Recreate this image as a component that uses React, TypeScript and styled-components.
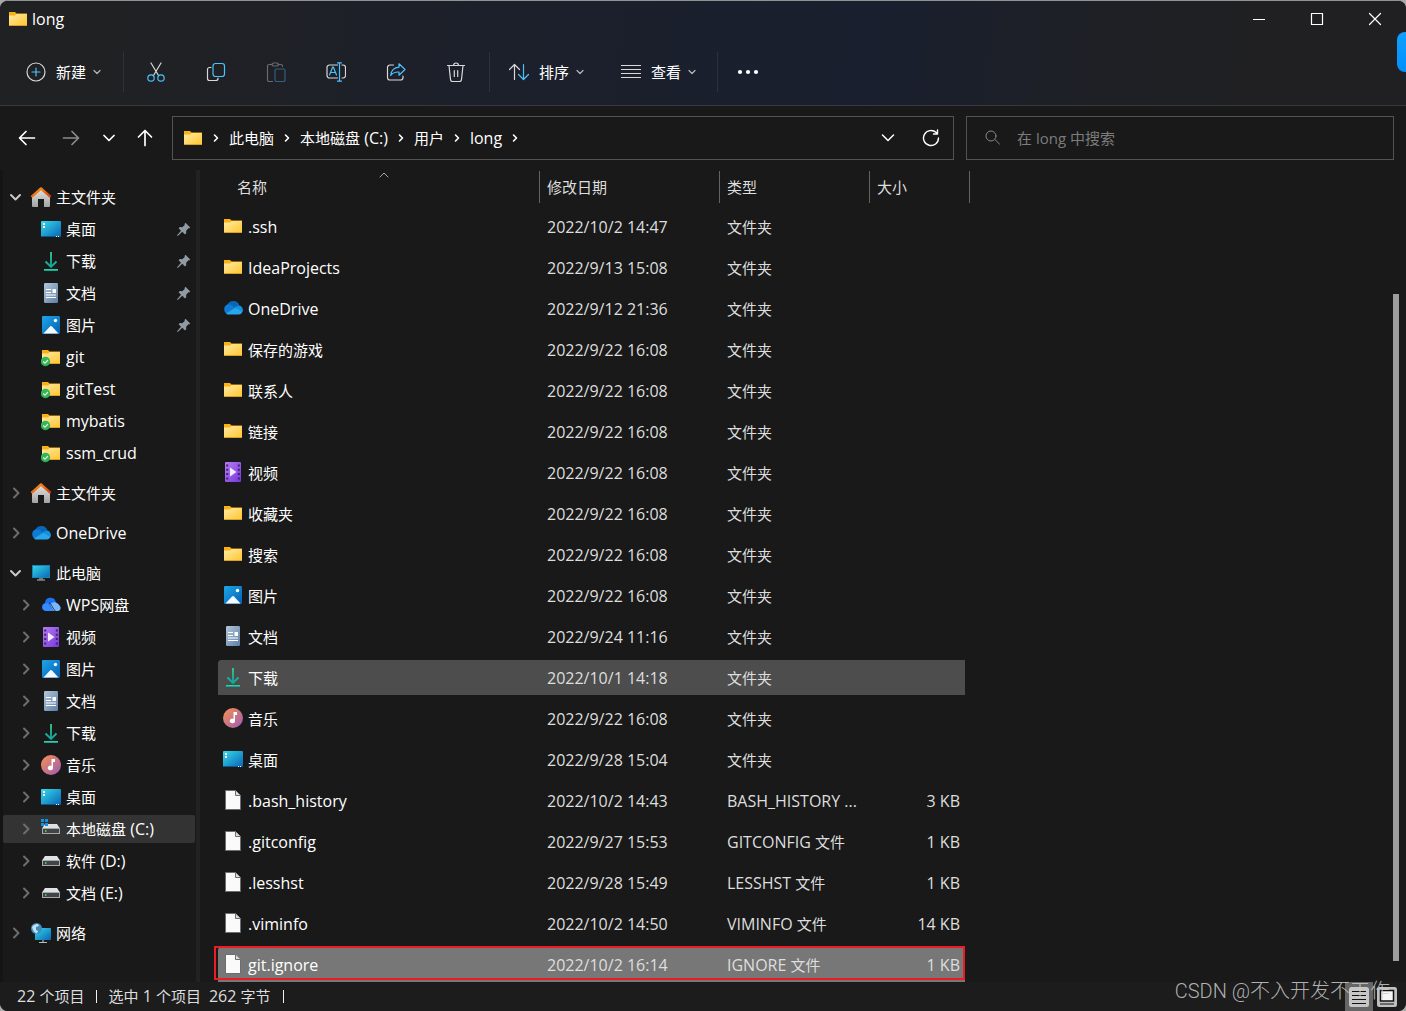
import React from "react";
import styled, { createGlobalStyle, css } from "styled-components";

const fontStack = `"Open Sans", "Noto Sans CJK SC", sans-serif`;

const GlobalStyle = createGlobalStyle`
  * { box-sizing: border-box; }
  html, body { margin: 0; height: 100%; }
  #root { height: 100%; }
  body {
    background: #a9aba9;
    color: #fff;
    font-family: ${fontStack};
    font-size: 15px;
    line-height: 20px;
    overflow: hidden;
  }
  button, input {
    font: inherit;
    color: inherit;
    background: none;
    border: 0;
    padding: 0;
    margin: 0;
  }
  svg { display: block; flex: none; }
`;

const Window = styled.div`
  position: relative;
  display: flex;
  flex-direction: column;
  height: 100%;
  overflow: hidden;
  border-top: 1px solid #8f9393;
  border-radius: 8px;
  background: #191919;
`;

const Top = styled.header`
  border-bottom: 1px solid #393a3c;
  background: linear-gradient(97deg, #202123 8%, #1c202b 36%, #1a1f2f 62%, #1d2027 74%, #202022 90%);
`;

const TitleBar = styled.div`
  display: flex;
  align-items: center;
  justify-content: space-between;
  height: 36px;
`;

const Title = styled.h1`
  display: flex;
  align-items: center;
  gap: 4px;
  margin: 0;
  padding-left: 8px;
  font-size: 15px;
  font-weight: 400;
`;

const WindowControls = styled.div`
  display: flex;
  padding-right: 2px;
`;

const ControlButton = styled.button`
  display: flex;
  align-items: center;
  justify-content: center;
  width: 58px;
  height: 36px;
`;

const Toolbar = styled.div`
  display: flex;
  align-items: center;
  height: 68px;
  padding: 2px 0 0 18px;
`;

const ToolButton = styled.button<{ $disabled?: boolean }>`
  display: flex;
  align-items: center;
  justify-content: center;
  width: 60px;
  height: 40px;
  opacity: ${(p) => (p.$disabled ? 0.4 : 1)};
`;

const MenuGroup = styled.div`
  display: flex;
  gap: 20px;
`;

const MenuButton = styled.button`
  display: flex;
  align-items: center;
  gap: 6px;
  height: 40px;
  padding: 0 8px;

  svg:first-child { margin-right: 4px; }
`;

const Separator = styled.span<{ $before?: number; $after?: number }>`
  width: 1px;
  height: 40px;
  margin: 0 ${(p) => p.$after ?? 0}px 0 ${(p) => p.$before ?? 0}px;
  background: #2e3138;
`;

const AddressRow = styled.div`
  display: flex;
  align-items: center;
  height: 64px;
  padding: 0 12px 0 7px;
`;

const NavButtons = styled.nav`
  display: flex;
  margin-right: 5px;
`;

const NavButton = styled.button<{ $width: number }>`
  display: flex;
  align-items: center;
  justify-content: center;
  width: ${(p) => p.$width}px;
  height: 36px;
`;

const AddressBox = styled.div`
  display: flex;
  align-items: center;
  flex: 760 1 0;
  height: 44px;
  padding: 0 10px;
  border: 1px solid #535353;
`;

const Crumbs = styled.ol`
  display: flex;
  align-items: center;
  flex: 1;
  margin: 0;
  padding: 0;
  list-style: none;
`;

const Crumb = styled.li`
  display: flex;
  align-items: center;

  svg { margin: 0 8px; }
`;

const AddressButton = styled.button`
  display: flex;
  align-items: center;
  justify-content: center;
  width: 24px;
  height: 36px;
  margin-left: 19px;
`;

const SearchBox = styled.label`
  display: flex;
  align-items: center;
  flex: 390 1 0;
  gap: 16px;
  height: 44px;
  margin-left: 12px;
  padding: 0 18px;
  border: 1px solid #535353;

  input {
    flex: 1;
    min-width: 0;
    outline: 0;
  }
  input::placeholder { color: #7c7c7c; opacity: 1; }
`;

const Main = styled.main`
  display: flex;
  flex: 1;
  min-height: 0;
`;

const Sidebar = styled.nav`
  width: 200px;
  flex: none;
  padding-top: 11px;
  border-left: 3px solid #141414;
  border-right: 4px solid #222222;
`;

const Group = styled.ul`
  margin: 0 0 8px;
  padding: 0;
  list-style: none;
`;

const SideRow = styled.li`
  padding: 2px 1px 2px 0;
`;

const SideItem = styled.button<{ $level: number; $selected?: boolean }>`
  display: flex;
  align-items: center;
  width: 100%;
  height: 28px;
  padding: 0 4px 0 ${(p) => (p.$level === 1 ? 4 : 14)}px;
  border-radius: 2px;
  background: ${(p) => (p.$selected ? "#333333" : "none")};
  text-align: left;
`;

const Twisty = styled.span`
  width: 16px;
  margin-right: 8px;
`;

const SideLabel = styled.span`
  flex: 1;
  padding-left: 5px;
  white-space: nowrap;
`;

const FileArea = styled.section`
  flex: 1;
  min-width: 0;
  padding-left: 18px;
  overflow: hidden;
`;

const FileTable = styled.table`
  border-collapse: separate;
  border-spacing: 0;
  table-layout: fixed;
  width: 752px;
`;

const HeadCell = styled.th<{ $width: number; $first?: boolean }>`
  position: relative;
  width: ${(p) => p.$width}px;
  height: 39px;
  padding: 0 0 6px ${(p) => (p.$first ? 19 : 7)}px;
  color: #dedede;
  font-weight: 400;
  text-align: left;

  &::after {
    content: "";
    position: absolute;
    top: 1px;
    right: 0;
    width: 1px;
    height: 32px;
    background: #636363;
  }
`;

const SortMark = styled.span`
  position: absolute;
  top: 2px;
  left: 50%;
`;

const Cell = styled.td`
  height: 41px;
  padding: 0 7px;
  border-bottom: 6px solid transparent;
  background-clip: padding-box;
  color: #dedede;
  white-space: nowrap;
`;

const NameCell = styled(Cell)`
  padding: 7px 5px 0;
  border-radius: 3px 0 0 3px;
  color: #fff;
  line-height: 22px;
  vertical-align: top;
`;

const SizeCell = styled(Cell)`
  padding: 0 5px;
  border-right: 5px solid transparent;
  text-align: right;
`;

const Row = styled.tr<{ $state?: "hover" | "selected" }>`
  position: relative;

  ${(p) => p.$state === "hover" && css`td { background-color: #4d4d4d; }`}
  ${(p) =>
    p.$state === "selected" &&
    css`
      td { background-color: #777777; }
      &::after {
        content: "";
        position: absolute;
        inset: -1px 5px 8px -4px;
        border: 2px solid #ed1c24;
      }
    `}
`;

const NameLine = styled.div`
  display: flex;
  align-items: flex-start;
  gap: 5px;
`;

const ScrollTrack = styled.div`
  display: flex;
  flex: none;
  width: 13px;
  padding: 124px 7px 21px 0;
`;

const ScrollThumb = styled.div`
  flex: 1;
  background: #9d9d9d;
`;

const StatusBar = styled.footer`
  display: flex;
  align-items: center;
  height: 29px;
  padding: 0 5px 0 17px;
  background: #1c1c1c;
  color: #dedede;
`;

const StatusText = styled.span`
  margin-right: 8px;
  padding-bottom: 2px;
`;

const StatusRule = styled.span`
  width: 1px;
  height: 13px;
  margin: 0 11px 0 4px;
  background: #f0f0f0;
`;

const ViewButtons = styled.div`
  display: flex;
  margin-left: auto;
`;

const ViewButton = styled.button<{ $on?: boolean }>`
  display: flex;
  align-items: center;
  justify-content: center;
  width: 28px;
  height: 29px;
  background: ${(p) => (p.$on ? "#666666" : "none")};
`;

const Watermark = styled.div`
  position: absolute;
  right: 16px;
  bottom: 6px;
  color: rgba(205, 205, 205, 0.85);
  font-family: Roboto, "Noto Sans CJK SC", sans-serif;
  font-size: 20px;
  font-weight: 300;
  line-height: 28px;
  pointer-events: none;
`;

const EdgeTab = styled.button`
  position: absolute;
  top: 31px;
  right: 0;
  width: 9px;
  height: 40px;
  border-radius: 8px 0 0 8px;
  background: linear-gradient(#10a0ff, #0090ff);
`;

const LatinRun = styled.span`
  font-size: 16px;
`;

/* Latin runs are set one size up so that they balance the ideographs beside them. */
function Label({ children }: { children: string }) {
  const runs = children.match(/[\u0000-\u00ff]+|[^\u0000-\u00ff]+/g) ?? [];
  return (
    <>
      {runs.map((run, i) =>
        run.charCodeAt(0) < 256 ? <LatinRun key={i}>{run}</LatinRun> : <React.Fragment key={i}>{run}</React.Fragment>
      )}
    </>
  );
}

type IconName =
  | "folder" | "synced" | "home" | "desktop" | "download" | "document" | "picture"
  | "cloud" | "pc" | "wps" | "video" | "music" | "system" | "drive" | "network" | "file";

const drawings: Record<IconName, React.ReactNode> = {
  folder: (
    <>
      <path d="M1 3h6l1.500 1.500H19V8H1z" fill="#f9b114" />
      <path d="M1 6.500h6L8.500 5H19v12H1z" fill="url(#gFolder)" />
      <path d="M1 16.500h18" stroke="#dba125" />
    </>
  ),
  synced: (
    <>
      <path d="M1 3h6l1.500 1.500H19V8H1z" fill="#f9b114" />
      <path d="M1 6.500h6L8.500 5H19v12H1z" fill="url(#gFolder)" />
      <path d="M1 16.500h18" stroke="#dba125" />
      <circle cx="4.500" cy="14.500" r="4.700" fill="#35b558" />
      <path d="M2.300 14.500l1.700 1.700 3-3.200" fill="none" stroke="#d9ffe2" strokeWidth="1.100" />
    </>
  ),
  home: (
    <>
      <path d="M1 9.500L10 1.500l9 8V19a1 1 0 0 1-1 1h-5v-8H7v8H2a1 1 0 0 1-1-1z" fill="url(#gHome)" />
      <path d="M1 9.300L10 1.500l9 7.800" fill="none" stroke="url(#gRoof)" strokeWidth="2.400" strokeLinecap="round" strokeLinejoin="round" />
    </>
  ),
  desktop: (
    <>
      <rect y="2" width="20" height="16" rx="1" fill="url(#gScreen)" />
      <path d="M0 17h20v0a1 1 0 0 1-1 1H1a1 1 0 0 1-1-1z" fill="#0a5791" />
      <path d="M2 4h2v2H2zM2 7h2v2H2zM15 17h1v1h-1zM17 17h1v1h-1z" fill="#fff" />
    </>
  ),
  download: (
    <g fill="none" stroke="url(#gDown)" strokeWidth="1.800">
      <path d="M10.010 1L10 15.500M4.500 10.500L10 16l5.500-5.500" />
      <path d="M3 19.010L17 19" />
    </g>
  ),
  document: (
    <>
      <rect x="3" width="14" height="20" rx="1.200" fill="url(#gDoc)" />
      <path d="M5 6.500h5M5 9.500h5M5 12h10M5 14.500h10" stroke="#fff" strokeWidth="1.100" />
      <path d="M11.500 6h3.500v4h-3.500z" fill="#fff" />
    </>
  ),
  picture: (
    <>
      <rect x="1" y="1" width="18" height="18" rx="1.200" fill="url(#gPic)" />
      <path d="M2.500 18.500L9 11.500q1-1 2 0l6.500 7z" fill="#f4faff" />
      <circle cx="14.500" cy="5.500" r="1.700" fill="#fff" />
    </>
  ),
  cloud: (
    <>
      <path d="M4 7.500C5.500 3.800 8 3 10.500 3c3 0 5.300 2 6 4.800L10 12z" fill="#0a66b8" />
      <path d="M5 16a5 5 0 0 1-.6-9.500C7 5.800 9 7.500 11 9l6 6z" fill="#0f7bd6" />
      <path d="M3 15.500L14.800 8.200A4.200 4.200 0 0 1 16 16.500H5q-1.200-.2-2-1z" fill="#28a8ea" />
      <path d="M11.500 9.200l4.200-1.600A4.500 4.500 0 0 1 19.500 14z" fill="#1490df" />
    </>
  ),
  pc: (
    <>
      <rect x="1" y="2" width="18" height="13" rx=".6" fill="url(#gScreen)" />
      <rect x="1.500" y="2.500" width="17" height="12" fill="none" stroke="#1685b4" />
      <path d="M8 15h4v1.500H8z" fill="#69747c" />
      <path d="M6 17h8" stroke="#b4bdc2" />
    </>
  ),
  wps: (
    <>
      <path d="M4 8a5.500 5.500 0 0 1 10.500-2l2 8-10-5z" fill="#1d72f2" />
      <path d="M4.500 16A4 4 0 0 1 4 8.200C9 7 9.500 13.500 13.500 16z" fill="#348bff" />
      <path d="M9 9.500c3-4 8-2.500 10.500 2.500.500 2-.5 4-3 4h-3C11 15 10.500 12 9 9.500z" fill="#79b7ff" />
      <path d="M8 7.500c3 1 3.500 6.500 6.500 8.500" fill="none" stroke="#1b2b45" strokeWidth=".8" />
    </>
  ),
  video: (
    <>
      <rect x="2" width="16" height="20" rx="1" fill="url(#gVideo)" />
      <path d="M4.200 2.500v16M15.800 2.500v16" stroke="#44206f" strokeWidth="2" strokeDasharray="2 2.300" />
      <path d="M7 5.500v9l6.500-4.500z" fill="#f4eaff" />
    </>
  ),
  music: (
    <>
      <circle cx="10" cy="10" r="10" fill="url(#gMusic)" />
      <path d="M10.500 4h3.500v3h-2v6a2.600 2.300 0 1 1-1.500-2.100z" fill="#fff" />
    </>
  ),
  system: (
    <>
      <path d="M4 5h12l3 4.500V15H1V9.500z" fill="#dfe1e4" />
      <path d="M1.500 9.500h17v5h-17z" fill="#414345" stroke="#a6a9ab" />
      <path d="M4 12h1.500" stroke="#45f05a" strokeWidth="1.600" />
      <path d="M0 0h3v3H0zM4 0h3v3H4zM0 4h3v3H0zM4 4h3v3H4z" fill="#1591e2" />
    </>
  ),
  drive: (
    <>
      <path d="M4 5h12l3 4.500V15H1V9.500z" fill="#dfe1e4" />
      <path d="M1.500 9.500h17v5h-17z" fill="#414345" stroke="#a6a9ab" />
      <path d="M4 12h1.500" stroke="#45f05a" strokeWidth="1.600" />
    </>
  ),
  network: (
    <>
      <rect x="4" y="5" width="16" height="12" rx=".6" fill="url(#gScreen)" />
      <path d="M11 17h2v2h-2z" fill="#69747c" />
      <path d="M8 19.500h8" stroke="#b4bdc2" />
      <circle cx="5.500" cy="5.500" r="5.500" fill="#3e8dbd" />
      <path d="M1 4q2-3 6-3l1 2-3 1v3l2 1-1 2.500Q2 9 1 4z" fill="#c4e2f2" />
    </>
  ),
  file: (
    <>
      <path d="M2.500.5h10l5 5v14h-15z" fill="#fafafa" stroke="#6d6d6d" />
      <path d="M12.500.5v5h5" fill="#dcdcdc" stroke="#6d6d6d" />
    </>
  ),
};

const Icon = ({ name }: { name: IconName }) => (
  <svg width="20" height="20" viewBox="0 0 20 20" aria-hidden="true">{drawings[name]}</svg>
);

const Gradient = ({ id, from, to, flat }: { id: string; from: string; to: string; flat?: boolean }) => (
  <linearGradient id={id} x1="0" y1="0" x2={flat ? "0" : "1"} y2="1">
    <stop stopColor={from} />
    <stop offset="1" stopColor={to} />
  </linearGradient>
);

const HiddenDefs = styled.svg`
  position: absolute;
`;

const Gradients = () => (
  <HiddenDefs width="0" height="0" aria-hidden="true">
    <defs>
      <Gradient id="gFolder" from="#ffeaa4" to="#ffc62e" />
      <Gradient id="gHome" from="#e4e4e4" to="#a2a2a2" flat />
      <Gradient id="gRoof" from="#ff9a1c" to="#d6400c" />
      <Gradient id="gScreen" from="#35dbe8" to="#0963b8" />
      <Gradient id="gDown" from="#35d08b" to="#0fa5a5" flat />
      <Gradient id="gDoc" from="#b3c7dc" to="#5d7ea3" />
      <Gradient id="gPic" from="#1ea6ea" to="#0460b4" />
      <Gradient id="gVideo" from="#b77cf3" to="#7637dc" />
      <Gradient id="gMusic" from="#fb9150" to="#9a5ab5" />
    </defs>
  </HiddenDefs>
);

interface StrokeProps {
  d: string;
  w?: number;
  h?: number;
  color?: string;
  width?: number;
}

const Stroke = ({ d, w = 12, h = 12, color = "#fff", width = 1 }: StrokeProps) => (
  <svg width={w} height={h} viewBox={`0 0 ${w} ${h}`} fill="none" stroke={color} strokeWidth={width} strokeLinecap="round" strokeLinejoin="round" aria-hidden="true">
    <path d={d} />
  </svg>
);

const Tool = ({ children }: { children: React.ReactNode }) => (
  <svg width="20" height="20" viewBox="0 0 20 20" fill="none" stroke="#d8d8d8" strokeWidth="1.200" strokeLinecap="round" strokeLinejoin="round" aria-hidden="true">
    {children}
  </svg>
);

const BLUE = "#4cc2ff";

const MenuChevron = () => <Stroke w={10} h={10} color="#b5b7ba" width={1.2} d="M2 3.500L5 6.500l3-3" />;
const CrumbChevron = () => <Stroke w={10} h={10} width={1.6} d="M3.500 2L6.500 5 3.500 8" />;
const Pin = () => (
  <svg width="14" height="14" viewBox="0 0 14 14" fill="#8f9ba3" aria-hidden="true">
    <path d="M8.500.8l4.700 4.700-1 1-.9-.2-2.200 2.600.1 2.300-1.200 1.200-2.700-2.700L1 13.700 0 14l.3-1L4 8.700 1.600 6.300l1.200-1.200 2.400.1 2.600-2.300-.3-1z" />
  </svg>
);

interface SideEntry {
  label: string;
  icon: IconName;
  level?: number;
  open?: boolean;
  twisty?: boolean;
  pinned?: boolean;
  selected?: boolean;
}

const sideGroups: SideEntry[][] = [
  [
    { label: "主文件夹", icon: "home", level: 1, open: true, twisty: true },
    { label: "桌面", icon: "desktop", pinned: true },
    { label: "下载", icon: "download", pinned: true },
    { label: "文档", icon: "document", pinned: true },
    { label: "图片", icon: "picture", pinned: true },
    { label: "git", icon: "synced" },
    { label: "gitTest", icon: "synced" },
    { label: "mybatis", icon: "synced" },
    { label: "ssm_crud", icon: "synced" },
  ],
  [{ label: "主文件夹", icon: "home", level: 1, twisty: true }],
  [{ label: "OneDrive", icon: "cloud", level: 1, twisty: true }],
  [
    { label: "此电脑", icon: "pc", level: 1, open: true, twisty: true },
    { label: "WPS网盘", icon: "wps", twisty: true },
    { label: "视频", icon: "video", twisty: true },
    { label: "图片", icon: "picture", twisty: true },
    { label: "文档", icon: "document", twisty: true },
    { label: "下载", icon: "download", twisty: true },
    { label: "音乐", icon: "music", twisty: true },
    { label: "桌面", icon: "desktop", twisty: true },
    { label: "本地磁盘 (C:)", icon: "system", twisty: true, selected: true },
    { label: "软件 (D:)", icon: "drive", twisty: true },
    { label: "文档 (E:)", icon: "drive", twisty: true },
  ],
  [{ label: "网络", icon: "network", level: 1, twisty: true }],
];

interface FileEntry {
  name: string;
  icon: IconName;
  date: string;
  type?: string;
  size?: string;
  state?: "hover" | "selected";
}

const files: FileEntry[] = [
  { name: ".ssh", icon: "folder", date: "2022/10/2 14:47" },
  { name: "IdeaProjects", icon: "folder", date: "2022/9/13 15:08" },
  { name: "OneDrive", icon: "cloud", date: "2022/9/12 21:36" },
  { name: "保存的游戏", icon: "folder", date: "2022/9/22 16:08" },
  { name: "联系人", icon: "folder", date: "2022/9/22 16:08" },
  { name: "链接", icon: "folder", date: "2022/9/22 16:08" },
  { name: "视频", icon: "video", date: "2022/9/22 16:08" },
  { name: "收藏夹", icon: "folder", date: "2022/9/22 16:08" },
  { name: "搜索", icon: "folder", date: "2022/9/22 16:08" },
  { name: "图片", icon: "picture", date: "2022/9/22 16:08" },
  { name: "文档", icon: "document", date: "2022/9/24 11:16" },
  { name: "下载", icon: "download", date: "2022/10/1 14:18", state: "hover" },
  { name: "音乐", icon: "music", date: "2022/9/22 16:08" },
  { name: "桌面", icon: "desktop", date: "2022/9/28 15:04" },
  { name: ".bash_history", icon: "file", date: "2022/10/2 14:43", type: "BASH_HISTORY ...", size: "3 KB" },
  { name: ".gitconfig", icon: "file", date: "2022/9/27 15:53", type: "GITCONFIG 文件", size: "1 KB" },
  { name: ".lesshst", icon: "file", date: "2022/9/28 15:49", type: "LESSHST 文件", size: "1 KB" },
  { name: ".viminfo", icon: "file", date: "2022/10/2 14:50", type: "VIMINFO 文件", size: "14 KB" },
  { name: "git.ignore", icon: "file", date: "2022/10/2 16:14", type: "IGNORE 文件", size: "1 KB", state: "selected" },
];

const crumbs = ["此电脑", "本地磁盘 (C:)", "用户", "long"];

function CommandBar() {
  return (
    <Toolbar>
      <MenuButton>
        <Tool>
          <circle cx="10" cy="10" r="9" />
          <path d="M10 6v8M6 10h8" stroke={BLUE} />
        </Tool>
        <span>新建</span>
        <MenuChevron />
      </MenuButton>
      <Separator $before={13} $after={2} />
      <ToolButton aria-label="剪切">
        <Tool>
          <path d="M5 1l7.500 12.500M15 1L7.500 13.500" />
          <circle cx="5" cy="16" r="3.200" stroke={BLUE} />
          <circle cx="15" cy="16" r="3.200" stroke={BLUE} />
        </Tool>
      </ToolButton>
      <ToolButton aria-label="复制">
        <Tool>
          <path d="M5 5.500H3.500a2 2 0 0 0-2 2v9a2 2 0 0 0 2 2H10a2 2 0 0 0 2-2V16" />
          <rect x="7" y="1.500" width="11.500" height="13" rx="2.500" stroke={BLUE} />
        </Tool>
      </ToolButton>
      <ToolButton aria-label="粘贴" $disabled disabled>
        <Tool>
          <path d="M6 2.500H3a1.500 1.500 0 0 0-1.500 1.500v14A1.500 1.500 0 0 0 3 19.500h3.500M12 2.500h3A1.500 1.500 0 0 1 16.500 4v.5" />
          <rect x="6" y="1" width="6.500" height="3" rx="1.500" />
          <rect x="9" y="7" width="10" height="12.500" rx="1.500" stroke={BLUE} />
        </Tool>
      </ToolButton>
      <ToolButton aria-label="重命名">
        <Tool>
          <path d="M11.500 3H3.500A2.500 2.500 0 0 0 1 5.500v8A2.500 2.500 0 0 0 3.500 16h8M16 3h1a2.500 2.500 0 0 1 2.500 2.500v8A2.500 2.500 0 0 1 17 16h-1" />
          <path d="M3.500 13l3.200-8h.6l3.200 8M4.800 10.500h4.500M13.500 1v18M11.500.8h4M11.500 19.200h4" stroke={BLUE} />
        </Tool>
      </ToolButton>
      <ToolButton aria-label="共享">
        <Tool>
          <path d="M7.500 3H4a2.500 2.500 0 0 0-2.500 2.500v10A2.500 2.500 0 0 0 4 18h10.500a2.500 2.500 0 0 0 2.500-2.500V14" />
          <path d="M13 1.800l6 5.700-6 5.700V10c-4-.2-6.500 1-8.300 3.500C5 9 8 5.500 13 5.200z" stroke={BLUE} />
        </Tool>
      </ToolButton>
      <ToolButton aria-label="删除">
        <Tool>
          <path d="M1.500 3.500h17M7.500 3.500a2.500 2.500 0 0 1 5 0M3 3.500l1.500 14q.2 2 2 2h7q1.800 0 2-2L17 3.500M8.300 8.500v6M11.700 8.500v6" />
        </Tool>
      </ToolButton>
      <Separator $before={3} $after={11} />
      <MenuGroup>
        <MenuButton>
          <Tool>
            <path d="M5.500 17.500v-15M.5 7.500l5-5 5 5" />
            <path d="M14.500 2.500v15M9.500 12.500l5 5 5-5" stroke={BLUE} />
          </Tool>
          <span>排序</span>
          <MenuChevron />
        </MenuButton>
        <MenuButton>
          <Tool>
            <path d="M.5 3.500h19M.5 7.500h19M.5 11.500h19M.5 15.500h19" />
          </Tool>
          <span>查看</span>
          <MenuChevron />
        </MenuButton>
      </MenuGroup>
      <Separator $before={12} />
      <ToolButton aria-label="查看更多">
        <svg width="22" height="6" viewBox="0 0 22 6" fill="#fff" aria-hidden="true">
          <circle cx="3" cy="3" r="2.100" />
          <circle cx="11" cy="3" r="2.100" />
          <circle cx="19" cy="3" r="2.100" />
        </svg>
      </ToolButton>
    </Toolbar>
  );
}

export default function App() {
  return (
    <Window>
      <GlobalStyle />
      <Gradients />
      <Top>
        <TitleBar>
          <Title><Icon name="folder" /><Label>long</Label></Title>
          <WindowControls>
            <ControlButton aria-label="最小化"><Stroke h={13} d="M0 6.500h12" /></ControlButton>
            <ControlButton aria-label="最大化"><Stroke w={14} h={14} width={1.2} d="M1.500 1.500h11v11h-11z" /></ControlButton>
            <ControlButton aria-label="关闭"><Stroke w={14} h={14} width={1.2} d="M1.500 1.500l11 11M12.500 1.500l-11 11" /></ControlButton>
          </WindowControls>
        </TitleBar>
        <CommandBar />
      </Top>
      <AddressRow>
        <NavButtons>
          <NavButton $width={40} aria-label="后退"><Stroke w={18} h={16} width={1.7} d="M16.500 8H2M8 1.500L1.500 8 8 14.500" /></NavButton>
          <NavButton $width={48} aria-label="前进"><Stroke w={18} h={16} width={1.7} color="#8c8c8c" d="M1.500 8H16M10 1.500L16.500 8 10 14.500" /></NavButton>
          <NavButton $width={28} aria-label="最近"><Stroke w={12} h={8} width={1.7} d="M1 1.500l5 5 5-5" /></NavButton>
          <NavButton $width={44} aria-label="向上"><Stroke w={16} h={18} width={1.7} d="M8 16.500V2M1.500 8L8 1.500 14.500 8" /></NavButton>
        </NavButtons>
        <AddressBox>
          <Icon name="folder" />
          <Crumbs>
            <Crumb><CrumbChevron /></Crumb>
            {crumbs.map((c) => (
              <Crumb key={c}><span><Label>{c}</Label></span><CrumbChevron /></Crumb>
            ))}
          </Crumbs>
          <AddressButton aria-label="展开"><Stroke w={14} h={10} width={1.5} d="M1.500 2L7 7.500 12.500 2" /></AddressButton>
          <AddressButton aria-label="刷新"><Stroke w={18} h={18} width={1.4} d="M16.500 9a7.500 7.500 0 1 1-2.300-5.400L15.500 5M15.500 1v4h-4" /></AddressButton>
        </AddressBox>
        <SearchBox>
          <Stroke w={16} h={16} color="#8a8a8a" d="M10.200 9.800L14.500 14M11 6a5 5 0 1 1-10 0 5 5 0 0 1 10 0z" />
          <input type="search" aria-label="搜索" placeholder="在 long 中搜索" />
        </SearchBox>
      </AddressRow>
      <Main>
        <Sidebar>
          {sideGroups.map((group, g) => (
            <Group key={g}>
              {group.map((item) => (
                <SideRow key={item.label}>
                  <SideItem $level={item.level ?? 2} $selected={item.selected}>
                    <Twisty>
                      {item.twisty &&
                        (item.open ? (
                          <Stroke w={16} h={16} width={2} color="#c9c9c9" d="M4 6l4.500 4.500L13 6" />
                        ) : (
                          <Stroke w={16} h={16} width={2} color="#6e6e6e" d="M7 3.500L11.500 8 7 12.500" />
                        ))}
                    </Twisty>
                    <Icon name={item.icon} />
                    <SideLabel><Label>{item.label}</Label></SideLabel>
                    {item.pinned && <Pin />}
                  </SideItem>
                </SideRow>
              ))}
            </Group>
          ))}
        </Sidebar>
        <FileArea>
          <FileTable>
            <thead>
              <tr>
                <HeadCell $width={322} $first>
                  名称
                  <SortMark><Stroke w={10} h={6} color="#a8a8a8" d="M1 5l4-4 4 4" /></SortMark>
                </HeadCell>
                <HeadCell $width={180}>修改日期</HeadCell>
                <HeadCell $width={150}>类型</HeadCell>
                <HeadCell $width={100}>大小</HeadCell>
              </tr>
            </thead>
            <tbody>
              {files.map((f) => (
                <Row key={f.name} $state={f.state}>
                  <NameCell>
                    <NameLine><Icon name={f.icon} /><span><Label>{f.name}</Label></span></NameLine>
                  </NameCell>
                  <Cell><Label>{f.date}</Label></Cell>
                  <Cell><Label>{f.type ?? "文件夹"}</Label></Cell>
                  <SizeCell><Label>{f.size ?? ""}</Label></SizeCell>
                </Row>
              ))}
            </tbody>
          </FileTable>
        </FileArea>
        <ScrollTrack><ScrollThumb /></ScrollTrack>
      </Main>
      <StatusBar>
        <StatusText><Label>22 个项目</Label></StatusText>
        <StatusRule />
        <StatusText><Label>选中 1 个项目</Label></StatusText>
        <StatusText><Label>262 字节</Label></StatusText>
        <StatusRule />
        <ViewButtons>
          <ViewButton $on aria-label="详细信息">
            <svg width="20" height="20" viewBox="0 0 20 20" aria-hidden="true">
              <rect width="20" height="20" rx="2.500" fill="#c6c6c6" />
              <path d="M3 4.500h14M3 8.500h14M3 12.500h14M3 16.500h14" stroke="#111" />
            </svg>
          </ViewButton>
          <ViewButton aria-label="大图标">
            <svg width="20" height="20" viewBox="0 0 20 20" aria-hidden="true">
              <rect width="20" height="20" rx="2.500" fill="#c0c0c0" />
              <path d="M3.500 3.500h13v10.500h-13z" fill="#f6f6f6" stroke="#111" strokeWidth="1.500" />
              <path d="M3 17h14" stroke="#111" />
            </svg>
          </ViewButton>
        </ViewButtons>
      </StatusBar>
      <Watermark>CSDN @不入开发不工作</Watermark>
      <EdgeTab aria-label="侧边栏" />
    </Window>
  );
}
